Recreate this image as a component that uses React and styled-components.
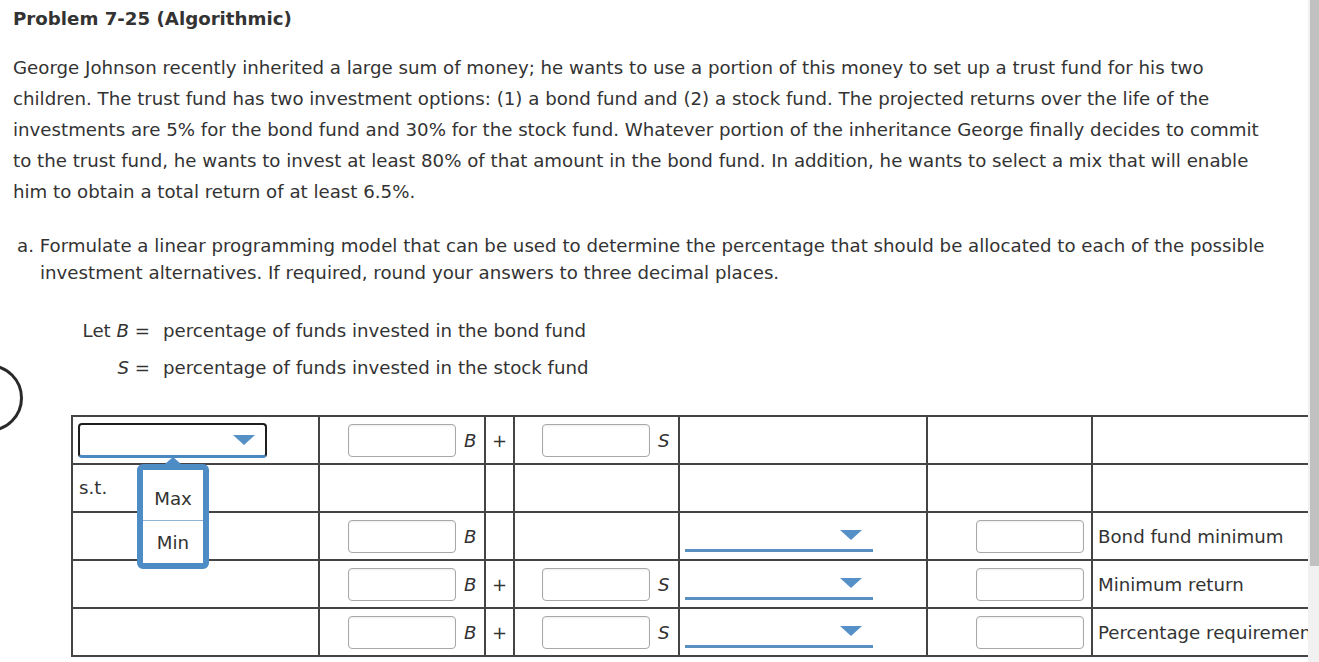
import React from "react";
import styled, { createGlobalStyle } from "styled-components";

const GlobalStyle = createGlobalStyle`
  html, body { margin: 0; padding: 0; background: #fff; overflow: hidden; }
  body { font-family: "DejaVu Sans", Verdana, sans-serif; color: #333; }
`;

const FS = "18.2px";

const Page = styled.div`
  position: relative;
  width: 1308px;
  height: 662px;
  overflow: hidden;
  padding: 8px 0 0 13px;
  box-sizing: border-box;
`;

const Title = styled.h1`
  margin: 0;
  font-size: ${FS};
  font-weight: bold;
  line-height: 22px;
`;

const Para = styled.p`
  margin: 22px 0 0 0;
  font-size: ${FS};
  line-height: 31px;
  width: 1250px;
`;

const PartA = styled.p`
  margin: 25px 0 0 4px;
  padding-left: 23px;
  text-indent: -23px;
  font-size: ${FS};
  line-height: 27px;
  width: 1250px;
`;

const LetGrid = styled.div`
  margin: 34px 0 0 0;
  display: grid;
  grid-template-columns: 137px auto;
  column-gap: 13px;
  row-gap: 15px;
  font-size: ${FS};
  line-height: 22px;
`;

const LetLabel = styled.span`
  text-align: right;
`;

const Var = styled.i`
  font-style: italic;
`;

const TableWrap = styled.div`
  position: relative;
  margin: 36px 0 0 58px;
  width: 1300px;
`;

const Table = styled.table`
  border-collapse: collapse;
  table-layout: fixed;
  font-size: ${FS};
`;

const Td = styled.td`
  border: 2px solid #444;
  height: 46px;
  padding: 0;
  width: ${(p) => p.$w}px;
  vertical-align: ${(p) => (p.$top ? "top" : "middle")};
`;

const CellRow = styled.div`
  display: flex;
  align-items: center;
  justify-content: ${(p) => p.$justify || "flex-start"};
  padding: ${(p) => p.$pad || "0"};
  gap: 8px;
`;

const Input = styled.div`
  width: 106px;
  height: 31px;
  border: 1px solid #a8a8a8;
  border-radius: 4px;
  box-shadow: inset 0 1px 2px rgba(0, 0, 0, 0.08);
  background: #fff;
`;

const VarLabel = styled.span`
  font-style: italic;
  width: 11px;
`;

const Plus = styled.div`
  text-align: center;
  font-size: 18px;
`;

const StText = styled.div`
  padding: 12px 0 0 6px;
  line-height: 22px;
`;

const SelectBox = styled.div`
  margin-left: 5px;
  width: 175px;
  height: 30px;
  border: 2px solid #1e1e1e;
  border-bottom: 3px solid #4a88c0;
  border-radius: 4px;
  display: flex;
  align-items: center;
  justify-content: flex-end;
  padding-right: 10px;
  box-sizing: content-box;
`;

const Triangle = styled.div`
  width: 0;
  height: 0;
  border-left: 11px solid transparent;
  border-right: 11px solid transparent;
  border-top: 10px solid #5590c6;
`;

const LineSelect = styled.div`
  margin: 17px 0 0 5px;
  width: 188px;
  height: 22px;
  border-bottom: 3px solid #5a8fc2;
  display: flex;
  align-items: flex-start;
  justify-content: flex-end;
  padding-right: 11px;
  box-sizing: border-box;
`;

const Label = styled.div`
  padding-left: 5px;
  white-space: nowrap;
  overflow: hidden;
`;

const Popup = styled.div`
  position: absolute;
  left: 66px;
  top: 49px;
  width: 60px;
  border: 6px solid #4d8cc4;
  border-radius: 6px;
  background: #fff;
  font-size: ${FS};
  &::before {
    content: "";
    position: absolute;
    left: 22px;
    top: -13px;
    border-left: 8px solid transparent;
    border-right: 8px solid transparent;
    border-bottom: 7px solid #4d8cc4;
  }
`;

const PopItem = styled.div`
  height: ${(p) => (p.$sep ? 43 : 50)}px;
  box-sizing: border-box;
  padding-top: ${(p) => (p.$sep ? 0 : 6)}px;
  display: flex;
  align-items: center;
  justify-content: center;
  border-top: ${(p) => (p.$sep ? "1px solid #8fb3d6" : "none")};
`;

const Circle = styled.div`
  position: absolute;
  left: -45px;
  top: 364px;
  width: 62px;
  height: 62px;
  border: 3px solid #2a2a2a;
  border-radius: 50%;
`;

const ScrollTrack = styled.div`
  position: fixed;
  right: 0;
  top: 0;
  width: 11px;
  height: 100%;
  background: #f1f1f1;
`;

const ScrollThumb = styled.div`
  margin-left: 2px;
  height: 566px;
  background: #c1c1c1;
`;

const widths = [245, 164, 27, 163, 246, 163, 240];

function InputVar({ v }) {
  return (
    <CellRow $justify="flex-end" $pad="0 9px 0 0">
      <Input />
      <VarLabel>{v}</VarLabel>
    </CellRow>
  );
}

function ConstraintRow({ plus, s, label }) {
  return (
    <tr>
      <Td $w={widths[0]} />
      <Td $w={widths[1]}>
        <InputVar v="B" />
      </Td>
      <Td $w={widths[2]}>{plus && <Plus>+</Plus>}</Td>
      <Td $w={widths[3]}>{s && <InputVar v="S" />}</Td>
      <Td $w={widths[4]} $top>
        <LineSelect>
          <Triangle />
        </LineSelect>
      </Td>
      <Td $w={widths[5]}>
        <CellRow $justify="flex-end" $pad="0 7px 0 0">
          <Input />
        </CellRow>
      </Td>
      <Td $w={widths[6]}>
        <Label>{label}</Label>
      </Td>
    </tr>
  );
}

export default function App() {
  return (
    <Page>
      <GlobalStyle />
      <Title>Problem 7-25 (Algorithmic)</Title>
      <Para>
        George Johnson recently inherited a large sum of money; he wants to use a portion of this money to set up a trust
        fund for his two children. The trust fund has two investment options: (1) a bond fund and (2) a stock fund. The
        projected returns over the life of the investments are 5% for the bond fund and 30% for the stock fund. Whatever
        portion of the inheritance George finally decides to commit to the trust fund, he wants to invest at least 80% of
        that amount in the bond fund. In addition, he wants to select a mix that will enable him to obtain a total return
        of at least 6.5%.
      </Para>
      <PartA>
        a. Formulate a linear programming model that can be used to determine the percentage that should be allocated to
        each of the possible investment alternatives. If required, round your answers to three decimal places.
      </PartA>
      <LetGrid>
        <LetLabel>
          Let <Var>B</Var> =
        </LetLabel>
        <span>percentage of funds invested in the bond fund</span>
        <LetLabel>
          <Var>S</Var> =
        </LetLabel>
        <span>percentage of funds invested in the stock fund</span>
      </LetGrid>
      <TableWrap>
        <Table>
          <tbody>
            <tr>
              <Td $w={widths[0]}>
                <SelectBox>
                  <Triangle />
                </SelectBox>
              </Td>
              <Td $w={widths[1]}>
                <InputVar v="B" />
              </Td>
              <Td $w={widths[2]}>
                <Plus>+</Plus>
              </Td>
              <Td $w={widths[3]}>
                <InputVar v="S" />
              </Td>
              <Td $w={widths[4]} />
              <Td $w={widths[5]} />
              <Td $w={widths[6]} />
            </tr>
            <tr>
              <Td $w={widths[0]} $top>
                <StText>s.t.</StText>
              </Td>
              <Td $w={widths[1]} />
              <Td $w={widths[2]} />
              <Td $w={widths[3]} />
              <Td $w={widths[4]} />
              <Td $w={widths[5]} />
              <Td $w={widths[6]} />
            </tr>
            <ConstraintRow label="Bond fund minimum" />
            <ConstraintRow plus s label="Minimum return" />
            <ConstraintRow plus s label="Percentage requirement" />
          </tbody>
        </Table>
        <Popup>
          <PopItem>Max</PopItem>
          <PopItem $sep>Min</PopItem>
        </Popup>
      </TableWrap>
      <Circle />
      <ScrollTrack>
        <ScrollThumb />
      </ScrollTrack>
    </Page>
  );
}
